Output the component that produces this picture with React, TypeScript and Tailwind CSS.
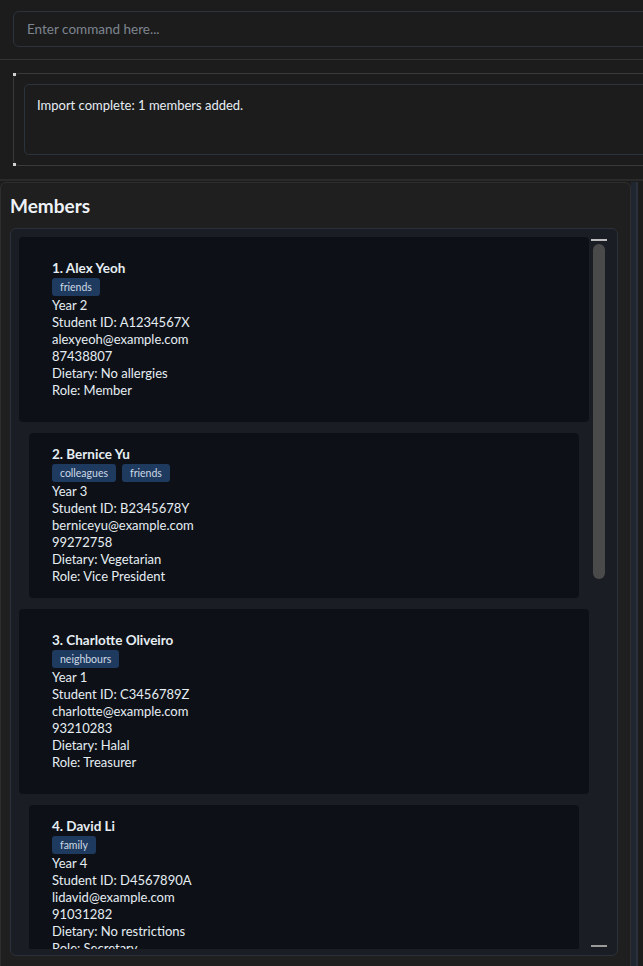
import React from "react";

type Member = {
  name: string;
  tags: string[];
  year: string;
  id: string;
  email: string;
  phone: string;
  dietary: string;
  role: string;
};

const members: Member[] = [
  { name: "1. Alex Yeoh", tags: ["friends"], year: "Year 2", id: "A1234567X", email: "alexyeoh@example.com", phone: "87438807", dietary: "No allergies", role: "Member" },
  { name: "2. Bernice Yu", tags: ["colleagues", "friends"], year: "Year 3", id: "B2345678Y", email: "berniceyu@example.com", phone: "99272758", dietary: "Vegetarian", role: "Vice President" },
  { name: "3. Charlotte Oliveiro", tags: ["neighbours"], year: "Year 1", id: "C3456789Z", email: "charlotte@example.com", phone: "93210283", dietary: "Halal", role: "Treasurer" },
  { name: "4. David Li", tags: ["family"], year: "Year 4", id: "D4567890A", email: "lidavid@example.com", phone: "91031282", dietary: "No restrictions", role: "Secretary" },
];

function Card({ m, wide }: { m: Member; wide: boolean }) {
  return (
    <div
      className={
        wide
          ? "shrink-0 w-[570px] rounded-[4px] bg-[#0d1117] pl-[33px] pt-[23px] pb-[23px]"
          : "shrink-0 w-[550px] ml-[10px] rounded-[4px] bg-[#0d1117] pl-[23px] pt-[13px] pb-[13px]"
      }
    >
      <div className="text-[13.5px] leading-[17px] font-bold text-[#e6edf3]">{m.name}</div>
      <div className="flex gap-[6px] mt-[1px] mb-[1px]">
        {m.tags.map((t) => (
          <span
            key={t}
            className="h-[18px] px-[8px] rounded-[3px] bg-[#1f3a5f] text-[10.5px] leading-[18px] text-[#cdd9e5]"
          >
            {t}
          </span>
        ))}
      </div>
      <div className="text-[13px] leading-[17px] text-[#e6edf3]">
        <div>{m.year}</div>
        <div>Student ID: {m.id}</div>
        <div>{m.email}</div>
        <div>{m.phone}</div>
        <div>Dietary: {m.dietary}</div>
        <div>Role: {m.role}</div>
      </div>
    </div>
  );
}

export default function App() {
  return (
    <div
      className="w-[643px] h-[966px] overflow-hidden bg-[#1c1c1c] flex flex-col"
      style={{ fontFamily: 'Lato, "Noto Sans", sans-serif' }}
    >
      {/* command box */}
      <div className="h-[59px] shrink-0 pl-[13px] pt-[11px]">
        <div className="w-[700px] h-[36px] rounded-[6px] border border-[#2b333d] bg-[#1c1c1c] pl-[13px] flex items-center">
          <span className="text-[13.5px] leading-[17px] text-[#7d8590]">Enter command here...</span>
        </div>
      </div>
      <div className="h-[1px] shrink-0 bg-[#333333]" />

      {/* result display */}
      <div className="h-[119px] shrink-0 pl-[13px] pt-[13px]">
        <div className="relative w-[700px] h-[93px] rounded-[6px] border border-[#3a3a3a] p-[10px]">
          <span className="absolute -left-[1px] -top-[1px] w-[3px] h-[3px] bg-[#d0d0d0]" />
          <span className="absolute -left-[1px] -bottom-[1px] w-[3px] h-[3px] bg-[#d0d0d0]" />
          <div className="h-[71px] rounded-[5px] border border-[#2b333d] pl-[12px] pt-[12px] text-[13px] leading-[17px] text-[#e6edf3]">
            Import complete: 1 members added.
          </div>
        </div>
      </div>
      <div className="h-[2px] shrink-0 bg-[#2a2a2a]" />

      {/* members area */}
      <div className="flex flex-1 pt-[1px]">
        <div className="w-[631px] shrink-0 rounded-tl-[6px] rounded-tr-[6px] border-t border-l border-r border-[#2e2e2e] bg-[#1f1f1f] pt-[11px]">
          <div className="pl-[9px] text-[19px] leading-[24px] font-bold text-[#eef2f7]">Members</div>
          <div className="mt-[10px] ml-[9px] w-[608px] h-[728px] rounded-[6px] border border-[#2a313a] bg-[#1a1e24] flex pl-[8px] pt-[8px] pb-[6px]">
            <div className="w-[570px] h-[712px] overflow-hidden flex flex-col gap-[11px]">
              {members.map((m, i) => (
                <Card key={m.name} m={m} wide={i % 2 === 0} />
              ))}
            </div>
            <div className="relative ml-[2px] w-[16px] h-[712px]">
              <div className="absolute left-0 top-[2px] w-[16px] h-[2px] bg-[#bdbdbd]" />
              <div className="absolute left-[2px] top-[7px] w-[12px] h-[335px] rounded-full bg-[#4a4a4a]" />
              <div className="absolute left-0 top-[708px] w-[16px] h-[2px] bg-[#9a9a9a]" />
            </div>
          </div>
        </div>
        <div className="flex-1 flex">
          <div className="w-[6px] bg-[#1f2630] border-r border-[#2a313a]" />
          <div className="flex-1 bg-[#1c1c1c] border-l border-[#2a313a]" />
        </div>
      </div>
    </div>
  );
}
